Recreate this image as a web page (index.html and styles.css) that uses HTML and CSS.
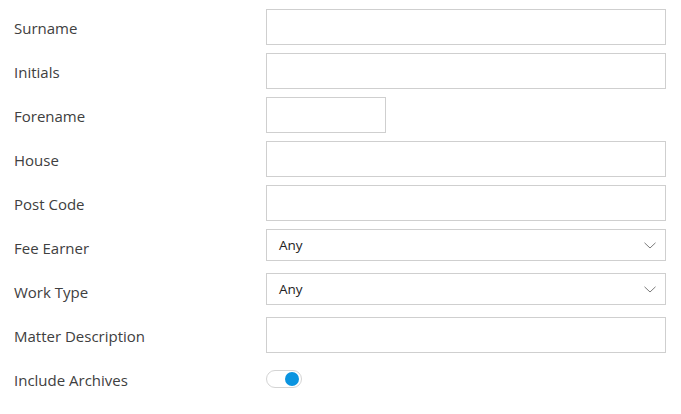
FILE: index.html
```html
<!DOCTYPE html>
<html>
<head>
<meta charset="utf-8">
<link rel="stylesheet" href="styles.css">
</head>
<body>
<form class="form">
  <div class="row"><label class="label">Surname</label><input class="field" type="text"></div>
  <div class="row"><label class="label">Initials</label><input class="field" type="text"></div>
  <div class="row"><label class="label">Forename</label><input class="field field-short" type="text"></div>
  <div class="row"><label class="label">House</label><input class="field" type="text"></div>
  <div class="row"><label class="label">Post Code</label><input class="field" type="text"></div>
  <div class="row"><label class="label">Fee Earner</label>
    <div class="select"><span class="select-text">Any</span>
      <svg class="chevron" width="12" height="7" viewBox="0 0 12 7"><path d="M0.5 0.8 L6 6 L11.5 0.8" fill="none" stroke="#7a7a7a" stroke-width="1"/></svg>
    </div>
  </div>
  <div class="row"><label class="label">Work Type</label>
    <div class="select"><span class="select-text">Any</span>
      <svg class="chevron" width="12" height="7" viewBox="0 0 12 7"><path d="M0.5 0.8 L6 6 L11.5 0.8" fill="none" stroke="#7a7a7a" stroke-width="1"/></svg>
    </div>
  </div>
  <div class="row"><label class="label">Matter Description</label><input class="field" type="text"></div>
  <div class="row"><label class="label">Include Archives</label>
    <div class="toggle"><span class="knob"></span></div>
  </div>
</form>
</body>
</html>
```
FILE: styles.css
```css
html, body {
  margin: 0;
  padding: 0;
  background: #ffffff;
}
body {
  font-family: "Open Sans", "Noto Sans", sans-serif;
  color: #323130;
}
.form {
  padding: 9px 0 0 14px;
  display: flex;
  flex-direction: column;
}
.row {
  display: flex;
  align-items: flex-start;
  height: 44px;
}
.label {
  width: 252px;
  flex: none;
  font-size: 15px;
  line-height: 20px;
  padding-top: 9px;
  color: #404040;
}
.field {
  box-sizing: border-box;
  width: 400px;
  height: 36px;
  margin: 0;
  border: 1px solid #cfcfcf;
  border-radius: 0;
  padding: 0 8px;
  background: #fff;
  outline: none;
  font: inherit;
}
.field-short {
  width: 120px;
}
.select {
  box-sizing: border-box;
  width: 400px;
  height: 32px;
  border: 1px solid #cfcfcf;
  display: flex;
  align-items: center;
  justify-content: space-between;
  padding: 0 9px 0 12px;
}
.select-text {
  font-size: 13.5px;
  color: #222222;
}
.chevron {
  display: block;
}
.toggle {
  box-sizing: border-box;
  margin-top: 9px;
  width: 36px;
  height: 18px;
  border: 1px solid #d4d4d4;
  border-radius: 9px;
  display: flex;
  align-items: center;
  justify-content: flex-end;
  padding-right: 2px;
  background: #fff;
}
.knob {
  width: 14px;
  height: 14px;
  border-radius: 50%;
  background: #0a94e0;
}
```
